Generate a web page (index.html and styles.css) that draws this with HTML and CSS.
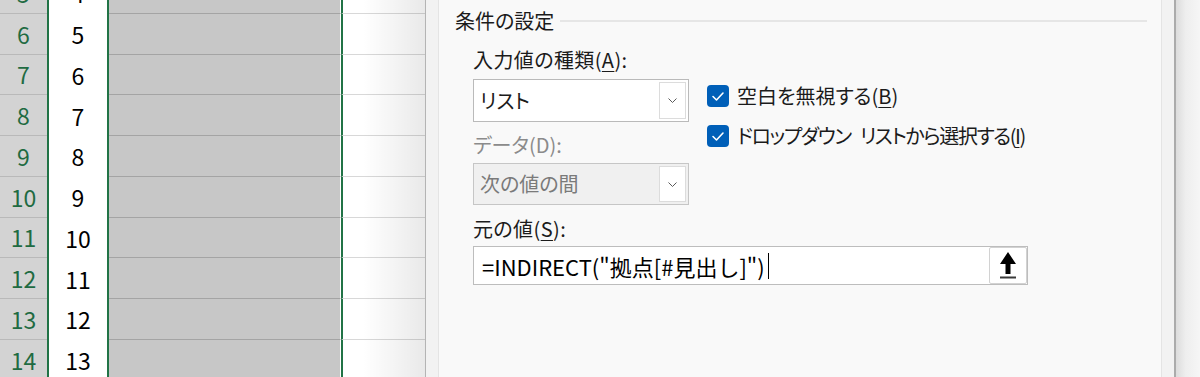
FILE: index.html
```html
<!DOCTYPE html>
<html lang="ja">
<head>
<meta charset="utf-8">
<title>データの入力規則</title>
<link rel="stylesheet" href="styles.css">
</head>
<body>
<div class="screen">
  <div class="sheet">
    <div class="rows">
      <div class="row"><div class="hdr">5</div><div class="num">4</div><div class="sel"></div><div class="rest"></div></div>
      <div class="row"><div class="hdr">6</div><div class="num">5</div><div class="sel"></div><div class="rest"></div></div>
      <div class="row"><div class="hdr">7</div><div class="num">6</div><div class="sel"></div><div class="rest"></div></div>
      <div class="row"><div class="hdr">8</div><div class="num">7</div><div class="sel"></div><div class="rest"></div></div>
      <div class="row"><div class="hdr">9</div><div class="num">8</div><div class="sel"></div><div class="rest"></div></div>
      <div class="row"><div class="hdr">10</div><div class="num">9</div><div class="sel"></div><div class="rest"></div></div>
      <div class="row"><div class="hdr">11</div><div class="num">10</div><div class="sel"></div><div class="rest"></div></div>
      <div class="row"><div class="hdr">12</div><div class="num">11</div><div class="sel"></div><div class="rest"></div></div>
      <div class="row"><div class="hdr">13</div><div class="num">12</div><div class="sel"></div><div class="rest"></div></div>
      <div class="row"><div class="hdr">14</div><div class="num">13</div><div class="sel"></div><div class="rest"></div></div>
    </div>
    <div class="shade"></div>
  </div>

  <div class="dialog">
    <div class="frame frame-l"></div>
    <div class="panel">
      <div class="group-head">
        <span class="group-title">条件の設定</span>
        <span class="group-rule"></span>
      </div>
      <div class="group-body">
        <div class="top">
          <div class="col-left">
            <div class="label">入力値の種類(<u>A</u>):</div>
            <div class="combo">
              <span class="combo-text">リスト</span>
              <span class="combo-btn"><svg width="9" height="5" viewBox="0 0 9 5"><polyline points="0.5,0.5 4.5,4.5 8.5,0.5" fill="none" stroke="#5a5a5a" stroke-width="1"/></svg></span>
            </div>
            <div class="label disabled">データ(D):</div>
            <div class="combo combo-disabled">
              <span class="combo-text">次の値の間</span>
              <span class="combo-btn"><svg width="9" height="5" viewBox="0 0 9 5"><polyline points="0.5,0.5 4.5,4.5 8.5,0.5" fill="none" stroke="#5a5a5a" stroke-width="1"/></svg></span>
            </div>
          </div>
          <div class="col-right">
            <div class="check">
              <span class="box"><svg width="22" height="22" viewBox="0 0 22 22"><polyline points="6,11.5 9.5,15 16,8" fill="none" stroke="#fff" stroke-width="1.6" stroke-linecap="round" stroke-linejoin="round"/></svg></span>
              <span class="check-label">空白を無視する(<u>B</u>)</span>
            </div>
            <div class="check">
              <span class="box"><svg width="22" height="22" viewBox="0 0 22 22"><polyline points="6,11.5 9.5,15 16,8" fill="none" stroke="#fff" stroke-width="1.6" stroke-linecap="round" stroke-linejoin="round"/></svg></span>
              <span class="check-label tight">ドロップダウン リストから選択する(<u>I</u>)</span>
            </div>
          </div>
        </div>
        <div class="label label-src">元の値(<u>S</u>):</div>
        <div class="ref-input">
          <span class="ref-text">=INDIRECT("拠点[#見出し]")</span><span class="caret"></span>
          <span class="ref-btn"><svg width="18" height="27" viewBox="0 0 18 27"><polygon points="9,0 17,12 11.5,12 11.5,22 6.5,22 6.5,12 1,12" fill="#000"/><rect x="1" y="24.5" width="16" height="2" fill="#3a3a3a"/></svg></span>
        </div>
      </div>
    </div>
    <div class="frame frame-r"></div>
    <div class="outer-shadow"></div>
  </div>
</div>
</body>
</html>
```

FILE: styles.css
```css
html, body {
  margin: 0;
  padding: 0;
  background: #ffffff;
}

.screen {
  display: flex;
  width: 1200px;
  height: 377px;
  overflow: hidden;
  font-family: "Noto Sans CJK JP", "Noto Sans", sans-serif;
}

/* ---------- spreadsheet ---------- */
.sheet {
  position: relative;
  width: 425px;
  flex: none;
  overflow: hidden;
}

.rows {
  margin-top: -27px;
}

.row {
  display: flex;
  height: 40.75px;
  box-sizing: border-box;
}

.hdr {
  width: 47px;
  flex: none;
  box-sizing: border-box;
  background: #d3d3d3;
  border-bottom: 1px solid #b9b9b9;
  color: #1f6b42;
  font-size: 23px;
  display: flex;
  align-items: center;
  justify-content: center;
}

.num {
  width: 62px;
  flex: none;
  box-sizing: border-box;
  background: #ffffff;
  border-left: 2px solid #217346;
  border-right: 2px solid #217346;
  color: #000;
  font-size: 23px;
  display: flex;
  align-items: center;
  justify-content: center;
}

.sel {
  width: 232px;
  flex: none;
  box-sizing: border-box;
  background: #c7c7c7;
  border-bottom: 1px solid #a4a4a4;
  border-right: 1px solid #ffffff;
}

.rest {
  flex: 1;
  box-sizing: border-box;
  background: #ffffff;
  border-left: 2px solid #217346;
  border-bottom: 1px solid #d8d8d8;
}

.shade {
  position: absolute;
  top: 0;
  right: 0;
  width: 62px;
  height: 100%;
  background: linear-gradient(to right, rgba(0,0,0,0), rgba(0,0,0,0.085));
}

/* ---------- dialog ---------- */
.dialog {
  flex: 1;
  display: flex;
  height: 377px;
}

.frame {
  width: 12px;
  flex: none;
  background: #f2f2f2;
}

.frame-l {
  border-left: 1px solid #b4b4b4;
  border-right: 1px solid #e4e4e4;
}

.frame-r {
  border-left: 1px solid #e4e4e4;
  border-right: 2px solid #ababab;
}

.outer-shadow {
  width: 24px;
  flex: none;
  background: linear-gradient(to right, #dcdcdc, #eeeeee 40%, #f6f6f6);
}

.panel {
  flex: 1;
  background: #f9f9f9;
  padding: 7px 14px 0 16px;
  color: #1b1b1b;
  font-size: 20px;
  font-feature-settings: "palt";
}

.group-head {
  display: flex;
  align-items: center;
  height: 28px;
}

.group-title {
  line-height: 28px;
  white-space: nowrap;
}

.group-rule {
  flex: 1;
  height: 2px;
  background: #e6e6e6;
  margin-left: 6px;
}

.group-body {
  margin-left: 18px;
}

.top {
  display: flex;
  gap: 18px;
  margin-top: 11px;
}

.col-left {
  width: 216px;
  flex: none;
}

.label {
  line-height: 28px;
  height: 28px;
  white-space: nowrap;
  letter-spacing: 0.4px;
}

.label u {
  text-underline-offset: 3px;
  text-decoration-thickness: 1px;
}

.disabled {
  color: #8b8b8b;
  margin-top: 9px;
  letter-spacing: 0;
}

.combo {
  display: flex;
  align-items: center;
  height: 43px;
  margin-top: 5px;
  box-sizing: border-box;
  border: 1px solid #bababa;
  background: #ffffff;
}

.combo-disabled {
  height: 42px;
  margin-top: 4px;
  background: #f0f0f0;
  border-color: #c6c6c6;
  color: #7a7a7a;
}

.combo-text {
  flex: 1;
  padding-left: 6px;
  line-height: 28px;
  white-space: nowrap;
}

.combo-btn {
  width: 27px;
  align-self: stretch;
  margin: 2px 2px 2px 0;
  box-sizing: border-box;
  border: 1px solid #dcdcdc;
  background: #ffffff;
  display: flex;
  align-items: center;
  justify-content: center;
}

.col-right {
  padding-top: 36px;
  display: flex;
  flex-direction: column;
  gap: 12px;
}

.check {
  display: flex;
  align-items: center;
  height: 28px;
  white-space: nowrap;
}

.box {
  width: 22px;
  height: 22px;
  flex: none;
  border-radius: 4px;
  background: #005fb8;
  display: flex;
}

.check-label {
  margin-left: 8px;
  line-height: 28px;
}

.tight {
  letter-spacing: -1.4px;
  word-spacing: 6px;
}

.check-label u {
  text-underline-offset: 3px;
  text-decoration-thickness: 1px;
}

.label-src {
  margin-top: 10px;
}

.ref-input {
  display: flex;
  align-items: center;
  width: 555px;
  height: 39px;
  margin-top: 3px;
  box-sizing: border-box;
  border: 1px solid #bdbdbd;
  background: #ffffff;
}

.ref-text {
  padding-left: 8px;
  font-size: 22px;
  color: #000;
  white-space: nowrap;
  font-feature-settings: normal;
}

.caret {
  width: 1px;
  height: 26px;
  margin-left: 3px;
  background: #000;
}

.ref-btn {
  margin-left: auto;
  width: 38px;
  height: 37px;
  box-sizing: border-box;
  border: 1px solid #d2d2d2;
  border-radius: 2px;
  background: #ffffff;
  display: flex;
  align-items: center;
  justify-content: center;
}
```
